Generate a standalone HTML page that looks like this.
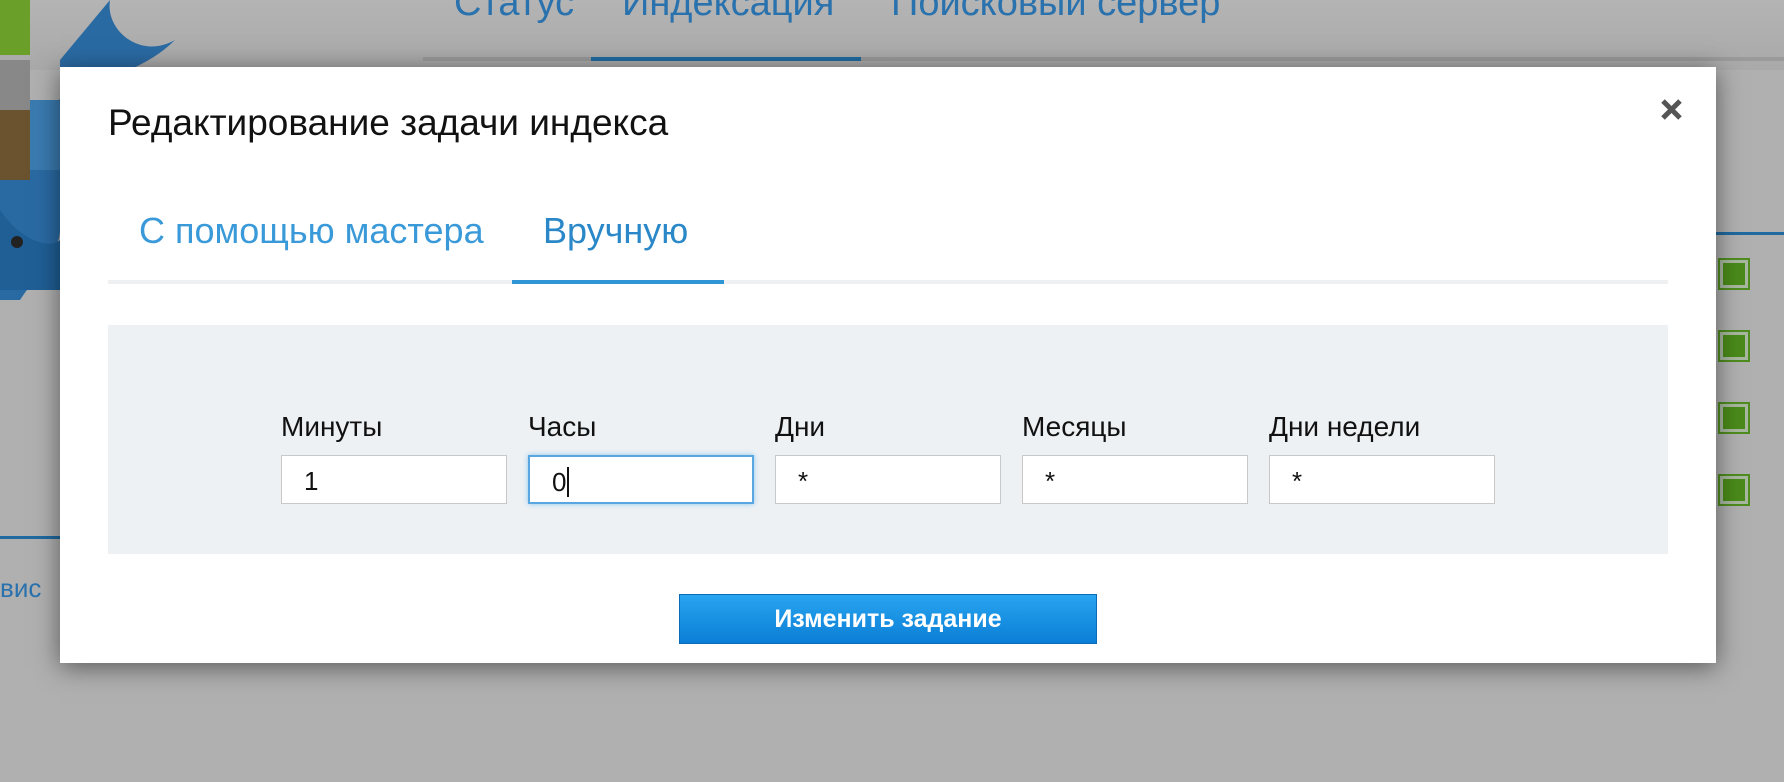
<!DOCTYPE html>
<html><head><meta charset="utf-8"><style>
*{margin:0;padding:0;box-sizing:border-box}
body{width:1784px;height:782px;overflow:hidden;background:#b0b0b0;font-family:"Liberation Sans","DejaVu Sans",sans-serif;position:relative}
.abs{position:absolute}
.nav{color:#2a72ad;font-size:38px;top:-18px}
.lbl{font-size:28px;color:#111;top:411px}
.inp{top:455px;width:226px;height:49px;border:1px solid #c8c8c8;background:#fff;font-size:26px;color:#111;padding:10px 0 0 22px}
.chk{left:1718px;width:32px;height:32px;border:2px solid #4f8d1f;background:#4a8a1a;box-shadow:inset 0 0 0 3px #a8b8a0}
</style></head><body>
<div class="abs" style="left:0;top:0;width:1784px;height:70px;background:linear-gradient(#b4b4b4,#a9a9a9)"></div>
<div class="abs" style="left:423px;top:57px;width:1361px;height:4px;background:#9a9a9a"></div>
<div class="abs" style="left:591px;top:57px;width:270px;height:4px;background:#1f6aa0"></div>
<div class="abs nav" style="left:454px">Статус</div>
<div class="abs nav" style="left:622px">Индексация</div>
<div class="abs nav" style="left:891px">Поисковый сервер</div>
<svg class="abs" style="left:0;top:0" width="200" height="300" viewBox="0 0 200 300">
<path d="M110 0 C105 30 140 60 175 40 C140 75 90 80 40 110 L0 130 L0 300 L20 300 C40 270 60 250 60 230 L60 60 Z" fill="#2a6aa3"/>
<path d="M0 210 C20 240 50 250 60 240 L60 290 L0 290 Z" fill="#1f5f96"/>
<rect x="0" y="0" width="30" height="55" fill="#6aa02a"/>
<rect x="0" y="60" width="30" height="50" fill="#888"/>
<rect x="0" y="110" width="30" height="70" fill="#6b5330"/>
<rect x="30" y="100" width="30" height="70" fill="#3a7bb0"/>
<circle cx="17" cy="242" r="6" fill="#222"/>
</svg>
<div class="abs" style="left:0;top:536px;width:60px;height:3px;background:#1f6aa0"></div>
<div class="abs" style="left:0;top:573px;font-size:26px;color:#2a72ad">вис</div>
<div class="abs" style="left:1716px;top:232px;width:68px;height:3px;background:#1f6aa0"></div>
<div class="chk abs" style="top:258px"></div>
<div class="chk abs" style="top:330px"></div>
<div class="chk abs" style="top:402px"></div>
<div class="chk abs" style="top:474px"></div>
<div class="abs" style="left:60px;top:67px;width:1656px;height:596px;background:#fff;box-shadow:0 4px 24px rgba(0,0,0,.5)"></div>
<div class="abs" style="left:108px;top:102px;font-size:37px;color:#111">Редактирование задачи индекса</div>
<svg class="abs" style="left:1660px;top:98px" width="23" height="23" viewBox="0 0 23 23"><path d="M3 3 L20 20 M20 3 L3 20" stroke="#555" stroke-width="5"/></svg>
<div class="abs" style="left:139px;top:210px;font-size:36px;color:#3a9ad9">С помощью мастера</div>
<div class="abs" style="left:543px;top:210px;font-size:36px;color:#2a88c8">Вручную</div>
<div class="abs" style="left:108px;top:280px;width:1560px;height:4px;background:#eef0f2"></div>
<div class="abs" style="left:512px;top:280px;width:212px;height:4px;background:#2f95d4"></div>
<div class="abs" style="left:108px;top:325px;width:1560px;height:229px;background:#edf1f4"></div>
<div class="abs lbl" style="left:281px">Минуты</div>
<div class="abs lbl" style="left:528px">Часы</div>
<div class="abs lbl" style="left:775px">Дни</div>
<div class="abs lbl" style="left:1022px">Месяцы</div>
<div class="abs lbl" style="left:1269px">Дни недели</div>
<div class="abs inp" style="left:281px">1</div>
<div class="abs inp" style="left:528px;border:2px solid #5aa6e0;box-shadow:0 0 5px #8cc6f0">0<span style="border-left:2px solid #111;margin-left:1px"></span></div>
<div class="abs inp" style="left:775px">*</div>
<div class="abs inp" style="left:1022px">*</div>
<div class="abs inp" style="left:1269px">*</div>
<div class="abs" style="left:679px;top:594px;width:418px;height:50px;background:linear-gradient(#28a4f0,#0b7fd6);border:1px solid #0a6cb8;color:#fff;font-weight:bold;font-size:25px;text-align:center;line-height:48px">Изменить задание</div>
</body></html>
